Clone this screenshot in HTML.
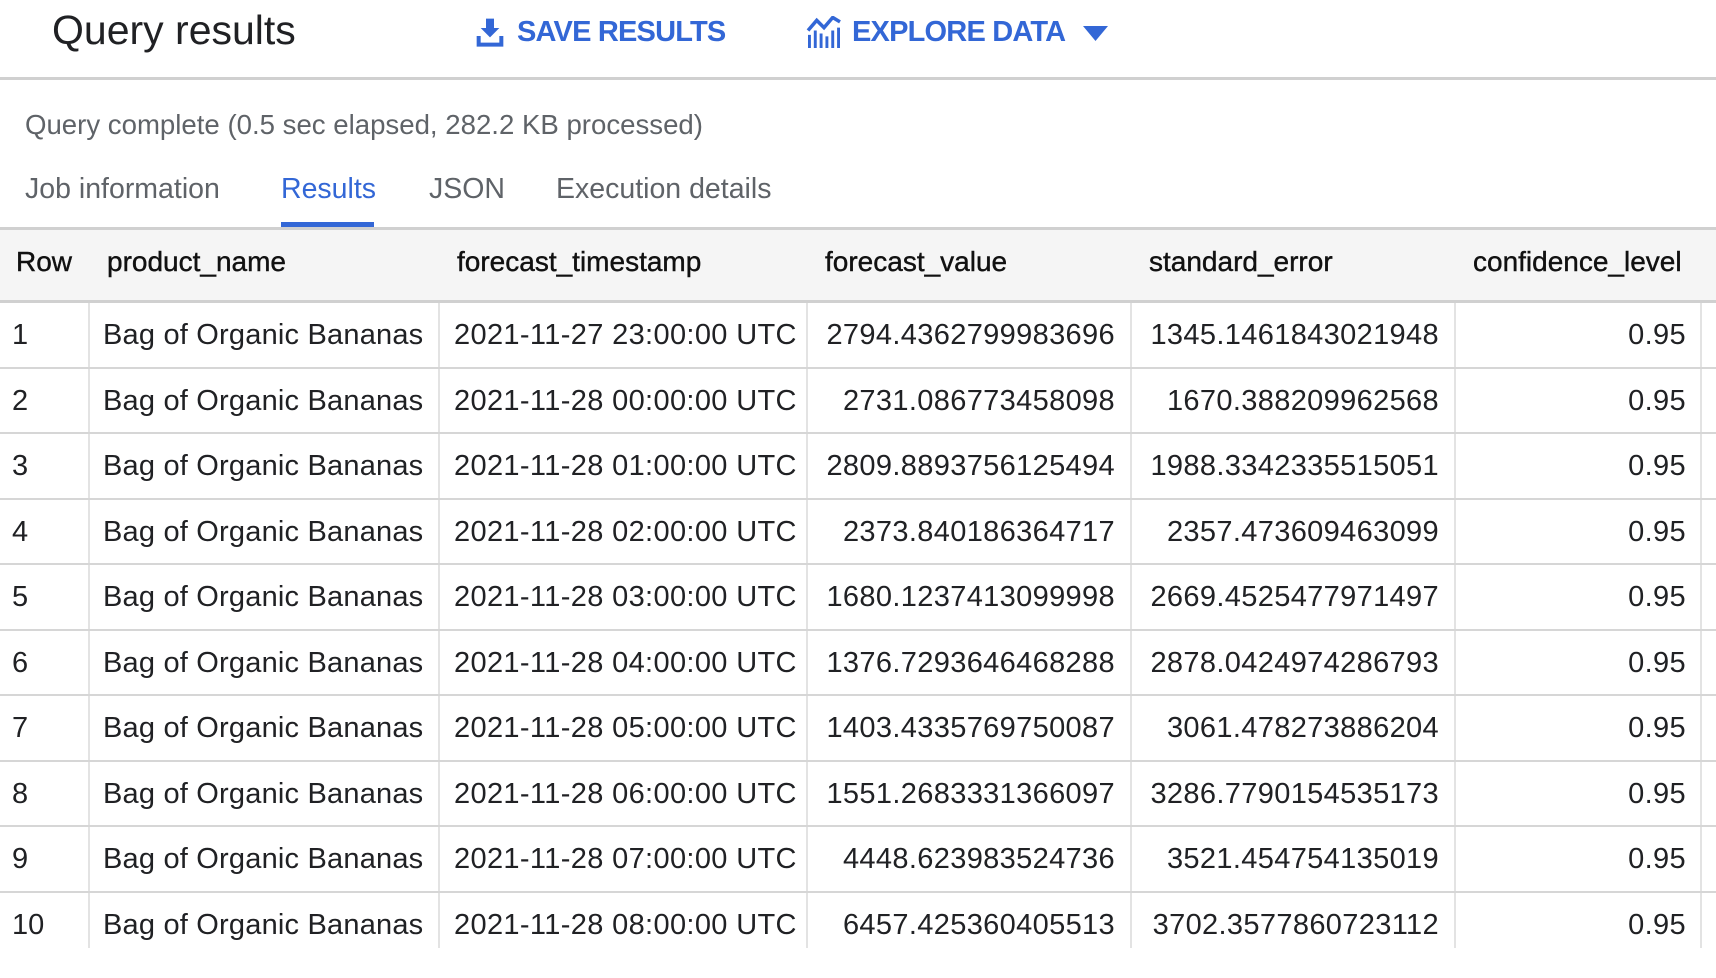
<!DOCTYPE html>
<html><head><meta charset="utf-8"><style>
*{margin:0;padding:0;box-sizing:border-box}
body{width:1716px;height:978px;background:#fff;font-family:"Liberation Sans",Arial,sans-serif;position:relative;overflow:hidden;color:#202124}
.a{position:absolute;white-space:nowrap}
.blue{color:#3367d6}
.hl{position:absolute;left:0;width:1716px;background:#d0d0d0}
.vl{position:absolute;width:2px;background:#e3e3e3}
.c{position:absolute;white-space:nowrap;font-size:29px;line-height:66px;color:#202124}
.n{letter-spacing:0.35px}
.r{text-align:right}
.h{position:absolute;font-size:28px;top:246px;white-space:nowrap;color:#111;-webkit-text-stroke:0.4px #111}
</style></head><body>
<div class="a" style="left:52px;top:7px;font-size:41px;color:#202124">Query results</div>
<svg class="a" style="left:474px;top:16px" width="32" height="32" viewBox="0 0 24 24"><path fill="#3367d6" d="M9 2h6v7h4l-7 7-7-7h4z M2 15h3v5h14v-5h3v8H2z"/></svg>
<div class="a blue" style="left:517px;top:16px;font-size:29px;font-weight:bold;letter-spacing:-0.8px">SAVE RESULTS</div>
<svg class="a" style="left:806px;top:16px" width="36" height="32" viewBox="0 0 24 22"><path fill="none" stroke="#3367d6" stroke-width="2.4" d="M1 10l6-7 5 5 6-7 5 3"/><path fill="#3367d6" d="M1 13h2v9H1zM5 10h2v12H5zM9 12h2v10H9zM13 14h2v8h-2zM17 10h2v12h-2zM21 8h2v14h-2z"/></svg>
<div class="a blue" style="left:852px;top:16px;font-size:29px;font-weight:bold;letter-spacing:-0.8px">EXPLORE DATA</div>
<svg class="a" style="left:1083px;top:26px" width="25" height="15" viewBox="0 0 25 15"><path fill="#3367d6" d="M0 0h25L12.5 15z"/></svg>
<div class="hl" style="top:77px;height:3px"></div>
<div class="a" style="left:25px;top:109px;font-size:27.6px;color:#5f6368">Query complete (0.5 sec elapsed, 282.2 KB processed)</div>
<div class="a" style="left:25px;top:173px;font-size:28.5px;color:#5f6368">Job information</div>
<div class="a blue" style="left:281px;top:173px;font-size:28.5px">Results</div>
<div class="a" style="left:429px;top:173px;font-size:28.5px;color:#5f6368">JSON</div>
<div class="a" style="left:556px;top:173px;font-size:28.5px;color:#5f6368">Execution details</div>
<div class="a" style="left:281px;top:222px;width:93px;height:5px;background:#3367d6"></div>
<div class="hl" style="top:227px;height:3px"></div>
<div class="a" style="left:0;top:230px;width:1716px;height:72px;background:#f5f5f5"></div>
<div class="hl" style="top:300px;height:3px"></div>
<div class="h" style="left:16px">Row</div>
<div class="h" style="left:107px">product_name</div>
<div class="h" style="left:457px">forecast_timestamp</div>
<div class="h" style="left:825px">forecast_value</div>
<div class="h" style="left:1149px">standard_error</div>
<div class="h" style="left:1473px">confidence_level</div>
<div class="vl" style="left:88px;top:303px;height:645px"></div>
<div class="vl" style="left:438px;top:303px;height:645px"></div>
<div class="vl" style="left:806px;top:303px;height:645px"></div>
<div class="vl" style="left:1130px;top:303px;height:645px"></div>
<div class="vl" style="left:1454px;top:303px;height:645px"></div>
<div class="vl" style="left:1700px;top:303px;height:645px"></div>
<div id="rows"></div>
<script>
var d=[
["2021-11-27 23:00:00 UTC","2794.4362799983696","1345.1461843021948"],
["2021-11-28 00:00:00 UTC","2731.086773458098","1670.388209962568"],
["2021-11-28 01:00:00 UTC","2809.8893756125494","1988.3342335515051"],
["2021-11-28 02:00:00 UTC","2373.840186364717","2357.473609463099"],
["2021-11-28 03:00:00 UTC","1680.1237413099998","2669.4525477971497"],
["2021-11-28 04:00:00 UTC","1376.7293646468288","2878.0424974286793"],
["2021-11-28 05:00:00 UTC","1403.4335769750087","3061.478273886204"],
["2021-11-28 06:00:00 UTC","1551.2683331366097","3286.7790154535173"],
["2021-11-28 07:00:00 UTC","4448.623983524736","3521.454754135019"],
["2021-11-28 08:00:00 UTC","6457.425360405513","3702.3577860723112"]];
var h="";
for(var i=0;i<10;i++){var t=302+i*65.5;
h+='<div class="c" style="left:12px;top:'+t+'px">'+(i+1)+'</div>';
h+='<div class="c" style="left:103px;top:'+t+'px;letter-spacing:0.2px">Bag of Organic Bananas</div>';
h+='<div class="c n" style="left:454px;top:'+t+'px">'+d[i][0]+'</div>';
h+='<div class="c r n" style="left:806px;width:309px;top:'+t+'px">'+d[i][1]+'</div>';
h+='<div class="c r n" style="left:1130px;width:309px;top:'+t+'px">'+d[i][2]+'</div>';
h+='<div class="c r n" style="left:1454px;width:232px;top:'+t+'px">0.95</div>';
if(i>0)h+='<div class="hl" style="top:'+(t-1)+'px;height:2px;background:#d6d6d6"></div>';}
document.getElementById("rows").innerHTML=h;
</script>
</body></html>
